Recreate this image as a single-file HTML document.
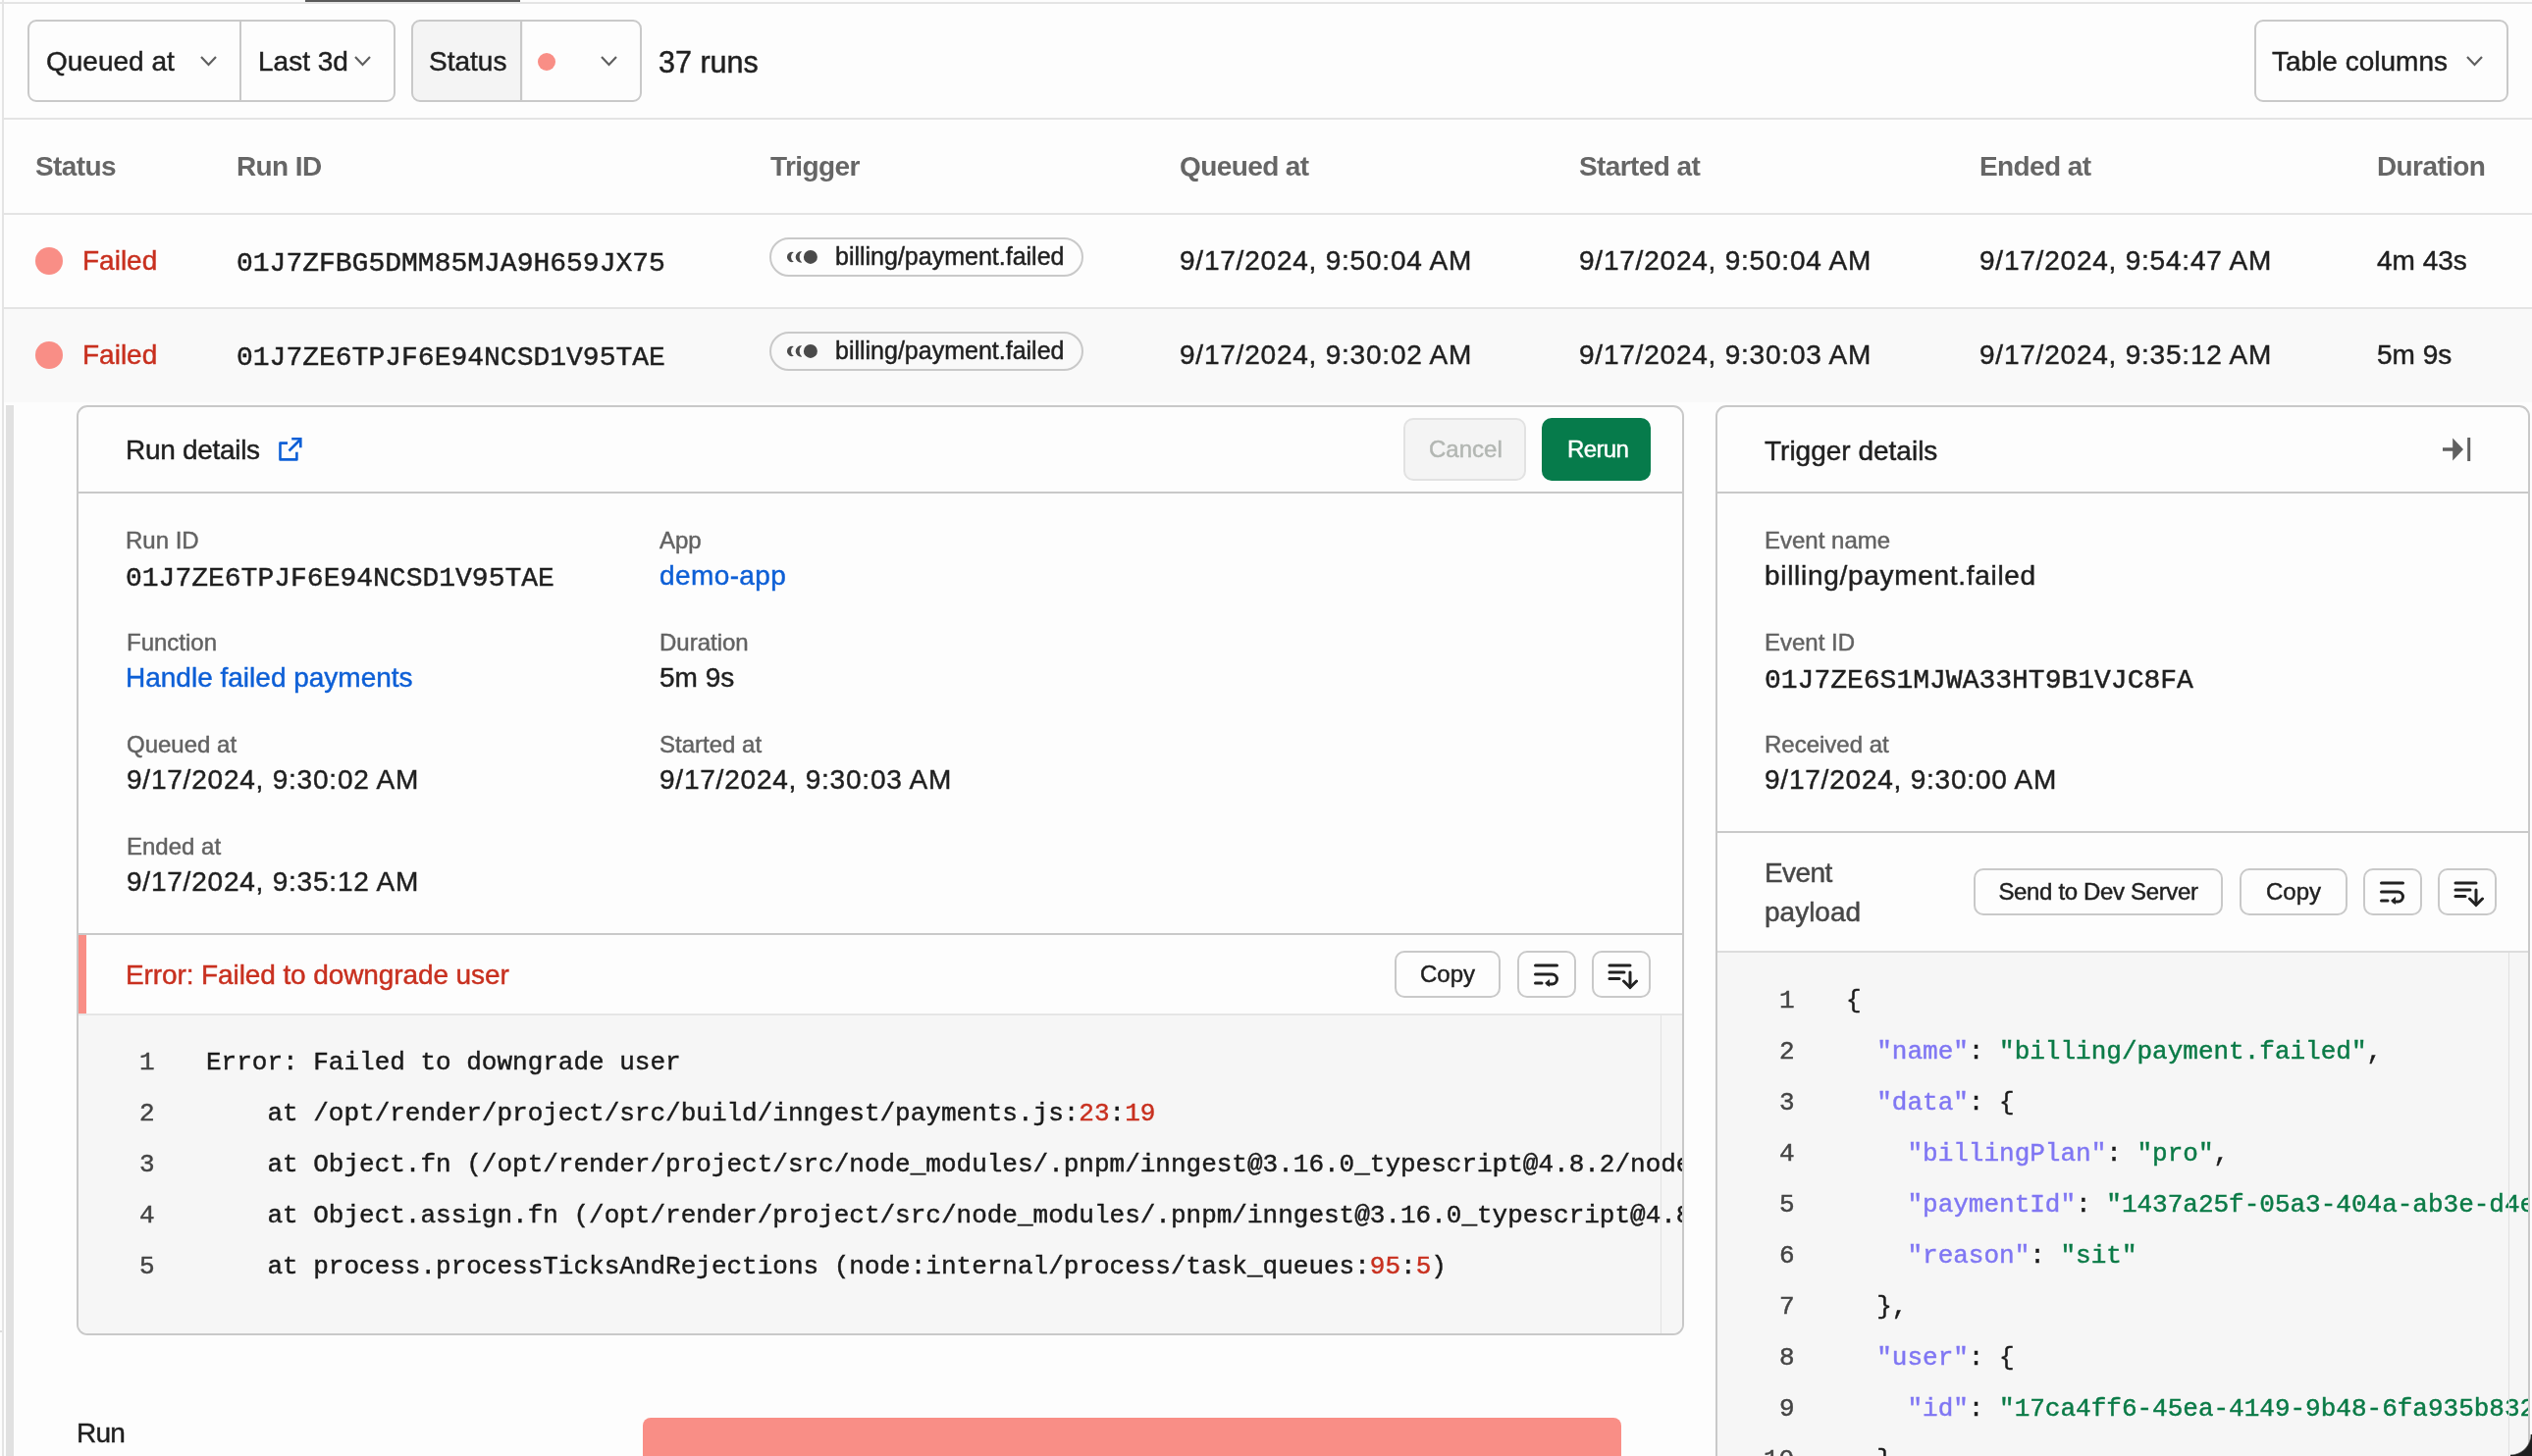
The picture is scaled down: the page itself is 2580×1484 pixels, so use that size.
<!DOCTYPE html>
<html><head><meta charset="utf-8"><title>Runs</title>
<style>
html,body{margin:0;padding:0;}
body{width:2580px;height:1484px;position:relative;overflow:hidden;background:#fdfdfd;font-family:'Liberation Sans', sans-serif;}
div{-webkit-text-stroke:0.45px currentColor;will-change:transform;}
</style></head><body>
<div style="position:absolute;left:0px;top:2px;width:2580px;height:2px;box-sizing:border-box;background:#e4e4e4"></div>
<div style="position:absolute;left:311px;top:0px;width:219px;height:2px;box-sizing:border-box;background:#5a5a5a"></div>
<div style="position:absolute;left:2px;top:0px;width:2px;height:1484px;box-sizing:border-box;background:#e4e4e4"></div>
<div style="position:absolute;left:28px;top:20px;width:375px;height:84px;box-sizing:border-box;border:2px solid #c9c9c9;border-radius:9px"></div>
<div style="position:absolute;left:244px;top:21px;width:2px;height:82px;box-sizing:border-box;background:#c9c9c9"></div>
<div style="position:absolute;left:47.0px;top:49.3px;font-family:'Liberation Sans', sans-serif;font-size:28px;line-height:28px;color:#1f1f1f;font-weight:400;white-space:pre;">Queued at</div>
<svg style="position:absolute;left:201.5px;top:55px;" width="21.0" height="14" viewBox="0 0 21.0 14"><path d="M3 3 L10.5 11 L18.0 3" fill="none" stroke="#5f5f5f" stroke-width="2.2"/></svg>
<div style="position:absolute;left:263.0px;top:49.3px;font-family:'Liberation Sans', sans-serif;font-size:28px;line-height:28px;color:#1f1f1f;font-weight:400;white-space:pre;">Last 3d</div>
<svg style="position:absolute;left:358.5px;top:55px;" width="21.0" height="14" viewBox="0 0 21.0 14"><path d="M3 3 L10.5 11 L18.0 3" fill="none" stroke="#5f5f5f" stroke-width="2.2"/></svg>
<div style="position:absolute;left:419px;top:20px;width:235px;height:84px;box-sizing:border-box;border:2px solid #c9c9c9;border-radius:9px;background:linear-gradient(to right,#f4f4f4 112px,#fdfdfd 112px)"></div>
<div style="position:absolute;left:530px;top:21px;width:2px;height:82px;box-sizing:border-box;background:#c9c9c9"></div>
<div style="position:absolute;left:437.0px;top:49.3px;font-family:'Liberation Sans', sans-serif;font-size:28px;line-height:28px;color:#1f1f1f;font-weight:400;white-space:pre;">Status</div>
<div style="position:absolute;left:548px;top:54px;width:18px;height:18px;border-radius:50%;background:#f98e86"></div>
<svg style="position:absolute;left:609.5px;top:54.5px;" width="21.0" height="14" viewBox="0 0 21.0 14"><path d="M3 3 L10.5 11 L18.0 3" fill="none" stroke="#5f5f5f" stroke-width="2.2"/></svg>
<div style="position:absolute;left:671.0px;top:47.7px;font-family:'Liberation Sans', sans-serif;font-size:30.5px;line-height:30.5px;color:#1f1f1f;font-weight:400;white-space:pre;">37 runs</div>
<div style="position:absolute;left:2297px;top:20px;width:259px;height:84px;box-sizing:border-box;border:2px solid #c9c9c9;border-radius:9px"></div>
<div style="position:absolute;left:2315.0px;top:48.8px;font-family:'Liberation Sans', sans-serif;font-size:28px;line-height:28px;color:#1f1f1f;font-weight:400;white-space:pre;">Table columns</div>
<svg style="position:absolute;left:2511.0px;top:54.5px;" width="21.0" height="14" viewBox="0 0 21.0 14"><path d="M3 3 L10.5 11 L18.0 3" fill="none" stroke="#5f5f5f" stroke-width="2.2"/></svg>
<div style="position:absolute;left:4px;top:120px;width:2576px;height:2px;box-sizing:border-box;background:#e4e4e4"></div>
<div style="position:absolute;left:4px;top:217px;width:2576px;height:2px;box-sizing:border-box;background:#e4e4e4"></div>
<div style="position:absolute;left:4px;top:313px;width:2576px;height:2px;box-sizing:border-box;background:#e4e4e4"></div>
<div style="position:absolute;left:4px;top:315px;width:2576px;height:95px;box-sizing:border-box;background:#f9f9f9"></div>
<div style="position:absolute;left:36.0px;top:156.3px;font-family:'Liberation Sans', sans-serif;font-size:28px;line-height:28px;color:#666666;font-weight:700;white-space:pre;letter-spacing:-0.6px;-webkit-text-stroke:0;">Status</div>
<div style="position:absolute;left:241.0px;top:156.3px;font-family:'Liberation Sans', sans-serif;font-size:28px;line-height:28px;color:#666666;font-weight:700;white-space:pre;letter-spacing:-0.6px;-webkit-text-stroke:0;">Run ID</div>
<div style="position:absolute;left:785.0px;top:156.3px;font-family:'Liberation Sans', sans-serif;font-size:28px;line-height:28px;color:#666666;font-weight:700;white-space:pre;letter-spacing:-0.6px;-webkit-text-stroke:0;">Trigger</div>
<div style="position:absolute;left:1202.0px;top:156.3px;font-family:'Liberation Sans', sans-serif;font-size:28px;line-height:28px;color:#666666;font-weight:700;white-space:pre;letter-spacing:-0.6px;-webkit-text-stroke:0;">Queued at</div>
<div style="position:absolute;left:1609.0px;top:156.3px;font-family:'Liberation Sans', sans-serif;font-size:28px;line-height:28px;color:#666666;font-weight:700;white-space:pre;letter-spacing:-0.6px;-webkit-text-stroke:0;">Started at</div>
<div style="position:absolute;left:2017.0px;top:156.3px;font-family:'Liberation Sans', sans-serif;font-size:28px;line-height:28px;color:#666666;font-weight:700;white-space:pre;letter-spacing:-0.6px;-webkit-text-stroke:0;">Ended at</div>
<div style="position:absolute;left:2422.0px;top:156.3px;font-family:'Liberation Sans', sans-serif;font-size:28px;line-height:28px;color:#666666;font-weight:700;white-space:pre;letter-spacing:-0.6px;-webkit-text-stroke:0;">Duration</div>
<div style="position:absolute;left:36px;top:252px;width:28px;height:28px;border-radius:50%;background:#f98e86"></div>
<div style="position:absolute;left:83.5px;top:252.3px;font-family:'Liberation Sans', sans-serif;font-size:28px;line-height:28px;color:#c8301f;font-weight:400;white-space:pre;">Failed</div>
<div style="position:absolute;left:241.0px;top:254.5px;font-family:'Liberation Mono', monospace;font-size:28px;line-height:28px;color:#1f1f1f;font-weight:400;white-space:pre;">01J7ZFBG5DMM85MJA9H659JX75</div>
<div style="position:absolute;left:784px;top:242px;width:320px;height:40px;box-sizing:border-box;border:2px solid #c9c9c9;border-radius:20px"></div>
<svg style="position:absolute;left:798px;top:250px;" width="40" height="24" viewBox="0 0 40 24"><path d="M10.8 7.1 A5.15 5.15 0 1 0 10.8 16.8 A5.6 5.6 0 0 1 10.8 7.1 Z" fill="#4a4a4a"/><path d="M19.1 6.3 A5.7 5.7 0 1 0 19.1 17.6 A7.6 7.6 0 0 1 19.1 6.3 Z" fill="#4a4a4a"/><circle cx="27.9" cy="11.9" r="7" fill="#4a4a4a"/></svg>
<div style="position:absolute;left:851.0px;top:248.8px;font-family:'Liberation Sans', sans-serif;font-size:25px;line-height:25px;color:#1f1f1f;font-weight:400;white-space:pre;">billing/payment.failed</div>
<div style="position:absolute;left:1202.0px;top:252.3px;font-family:'Liberation Sans', sans-serif;font-size:28px;line-height:28px;color:#1f1f1f;font-weight:400;white-space:pre;letter-spacing:0.78px;">9/17/2024, 9:50:04 AM</div>
<div style="position:absolute;left:1609.0px;top:252.3px;font-family:'Liberation Sans', sans-serif;font-size:28px;line-height:28px;color:#1f1f1f;font-weight:400;white-space:pre;letter-spacing:0.78px;">9/17/2024, 9:50:04 AM</div>
<div style="position:absolute;left:2017.0px;top:252.3px;font-family:'Liberation Sans', sans-serif;font-size:28px;line-height:28px;color:#1f1f1f;font-weight:400;white-space:pre;letter-spacing:0.78px;">9/17/2024, 9:54:47 AM</div>
<div style="position:absolute;left:2422.0px;top:252.3px;font-family:'Liberation Sans', sans-serif;font-size:28px;line-height:28px;color:#1f1f1f;font-weight:400;white-space:pre;">4m 43s</div>
<div style="position:absolute;left:36px;top:348px;width:28px;height:28px;border-radius:50%;background:#f98e86"></div>
<div style="position:absolute;left:83.5px;top:348.3px;font-family:'Liberation Sans', sans-serif;font-size:28px;line-height:28px;color:#c8301f;font-weight:400;white-space:pre;">Failed</div>
<div style="position:absolute;left:241.0px;top:350.5px;font-family:'Liberation Mono', monospace;font-size:28px;line-height:28px;color:#1f1f1f;font-weight:400;white-space:pre;">01J7ZE6TPJF6E94NCSD1V95TAE</div>
<div style="position:absolute;left:784px;top:338px;width:320px;height:40px;box-sizing:border-box;border:2px solid #c9c9c9;border-radius:20px"></div>
<svg style="position:absolute;left:798px;top:346px;" width="40" height="24" viewBox="0 0 40 24"><path d="M10.8 7.1 A5.15 5.15 0 1 0 10.8 16.8 A5.6 5.6 0 0 1 10.8 7.1 Z" fill="#4a4a4a"/><path d="M19.1 6.3 A5.7 5.7 0 1 0 19.1 17.6 A7.6 7.6 0 0 1 19.1 6.3 Z" fill="#4a4a4a"/><circle cx="27.9" cy="11.9" r="7" fill="#4a4a4a"/></svg>
<div style="position:absolute;left:851.0px;top:344.8px;font-family:'Liberation Sans', sans-serif;font-size:25px;line-height:25px;color:#1f1f1f;font-weight:400;white-space:pre;">billing/payment.failed</div>
<div style="position:absolute;left:1202.0px;top:348.3px;font-family:'Liberation Sans', sans-serif;font-size:28px;line-height:28px;color:#1f1f1f;font-weight:400;white-space:pre;letter-spacing:0.78px;">9/17/2024, 9:30:02 AM</div>
<div style="position:absolute;left:1609.0px;top:348.3px;font-family:'Liberation Sans', sans-serif;font-size:28px;line-height:28px;color:#1f1f1f;font-weight:400;white-space:pre;letter-spacing:0.78px;">9/17/2024, 9:30:03 AM</div>
<div style="position:absolute;left:2017.0px;top:348.3px;font-family:'Liberation Sans', sans-serif;font-size:28px;line-height:28px;color:#1f1f1f;font-weight:400;white-space:pre;letter-spacing:0.78px;">9/17/2024, 9:35:12 AM</div>
<div style="position:absolute;left:2422.0px;top:348.3px;font-family:'Liberation Sans', sans-serif;font-size:28px;line-height:28px;color:#1f1f1f;font-weight:400;white-space:pre;">5m 9s</div>
<div style="position:absolute;left:6px;top:413px;width:8px;height:1071px;box-sizing:border-box;background:#e1e1e1"></div>
<div style="position:absolute;left:78px;top:413px;width:1638px;height:948px;box-sizing:border-box;border:2px solid #c9c9c9;border-radius:11px;background:#fdfdfd"></div>
<div style="position:absolute;left:80px;top:501px;width:1634px;height:2px;box-sizing:border-box;background:#c9c9c9"></div>
<div style="position:absolute;left:128.0px;top:444.8px;font-family:'Liberation Sans', sans-serif;font-size:28px;line-height:28px;color:#1f1f1f;font-weight:400;white-space:pre;letter-spacing:-0.3px;">Run details</div>
<svg style="position:absolute;left:280px;top:443px;" width="32" height="32" viewBox="0 0 32 32"><path d="M13 8.6 H5.5 V25.4 H22.4 V17.8" fill="none" stroke="#0d5fd6" stroke-width="2.6" stroke-linejoin="round"/><path d="M14.5 16.5 L26 5" fill="none" stroke="#0d5fd6" stroke-width="2.6"/><path d="M17.2 4.3 H26.3 V13.3" fill="none" stroke="#0d5fd6" stroke-width="2.6"/></svg>
<div style="position:absolute;left:1430px;top:426px;width:125px;height:64px;box-sizing:border-box;border:2px solid #e2e2e2;border-radius:10px;background:#f4f4f4"></div>
<div style="position:absolute;left:1456.0px;top:446.0px;font-family:'Liberation Sans', sans-serif;font-size:24px;line-height:24px;color:#b2b6b2;font-weight:400;white-space:pre;">Cancel</div>
<div style="position:absolute;left:1571px;top:426px;width:111px;height:64px;box-sizing:border-box;border-radius:10px;background:#067b4b"></div>
<div style="position:absolute;left:1597.0px;top:446.0px;font-family:'Liberation Sans', sans-serif;font-size:24px;line-height:24px;color:#ffffff;font-weight:400;white-space:pre;letter-spacing:-0.6px;">Rerun</div>
<div style="position:absolute;left:128.0px;top:538.7px;font-family:'Liberation Sans', sans-serif;font-size:24px;line-height:24px;color:#626262;font-weight:400;white-space:pre;">Run ID</div>
<div style="position:absolute;left:128.0px;top:575.5px;font-family:'Liberation Mono', monospace;font-size:28px;line-height:28px;color:#1f1f1f;font-weight:400;white-space:pre;">01J7ZE6TPJF6E94NCSD1V95TAE</div>
<div style="position:absolute;left:672.0px;top:538.7px;font-family:'Liberation Sans', sans-serif;font-size:24px;line-height:24px;color:#626262;font-weight:400;white-space:pre;">App</div>
<div style="position:absolute;left:672.0px;top:573.3px;font-family:'Liberation Sans', sans-serif;font-size:28px;line-height:28px;color:#0d5fd6;font-weight:400;white-space:pre;letter-spacing:0.4px;">demo-app</div>
<div style="position:absolute;left:129.0px;top:642.7px;font-family:'Liberation Sans', sans-serif;font-size:24px;line-height:24px;color:#626262;font-weight:400;white-space:pre;">Function</div>
<div style="position:absolute;left:127.5px;top:677.3px;font-family:'Liberation Sans', sans-serif;font-size:28px;line-height:28px;color:#0d5fd6;font-weight:400;white-space:pre;">Handle failed payments</div>
<div style="position:absolute;left:672.0px;top:642.7px;font-family:'Liberation Sans', sans-serif;font-size:24px;line-height:24px;color:#626262;font-weight:400;white-space:pre;">Duration</div>
<div style="position:absolute;left:672.0px;top:677.3px;font-family:'Liberation Sans', sans-serif;font-size:28px;line-height:28px;color:#1f1f1f;font-weight:400;white-space:pre;">5m 9s</div>
<div style="position:absolute;left:129.0px;top:746.7px;font-family:'Liberation Sans', sans-serif;font-size:24px;line-height:24px;color:#626262;font-weight:400;white-space:pre;">Queued at</div>
<div style="position:absolute;left:129.0px;top:781.3px;font-family:'Liberation Sans', sans-serif;font-size:28px;line-height:28px;color:#1f1f1f;font-weight:400;white-space:pre;letter-spacing:0.78px;">9/17/2024, 9:30:02 AM</div>
<div style="position:absolute;left:672.0px;top:746.7px;font-family:'Liberation Sans', sans-serif;font-size:24px;line-height:24px;color:#626262;font-weight:400;white-space:pre;">Started at</div>
<div style="position:absolute;left:672.0px;top:781.3px;font-family:'Liberation Sans', sans-serif;font-size:28px;line-height:28px;color:#1f1f1f;font-weight:400;white-space:pre;letter-spacing:0.78px;">9/17/2024, 9:30:03 AM</div>
<div style="position:absolute;left:129.0px;top:850.7px;font-family:'Liberation Sans', sans-serif;font-size:24px;line-height:24px;color:#626262;font-weight:400;white-space:pre;">Ended at</div>
<div style="position:absolute;left:129.0px;top:885.3px;font-family:'Liberation Sans', sans-serif;font-size:28px;line-height:28px;color:#1f1f1f;font-weight:400;white-space:pre;letter-spacing:0.78px;">9/17/2024, 9:35:12 AM</div>
<div style="position:absolute;left:80px;top:951px;width:1634px;height:2px;box-sizing:border-box;background:#c9c9c9"></div>
<div style="position:absolute;left:80px;top:953px;width:8px;height:80px;box-sizing:border-box;background:#f98e86"></div>
<div style="position:absolute;left:128.0px;top:979.8px;font-family:'Liberation Sans', sans-serif;font-size:28px;line-height:28px;color:#c8301f;font-weight:400;white-space:pre;letter-spacing:-0.1px;">Error: Failed to downgrade user</div>
<div style="position:absolute;left:1421px;top:969px;width:108px;height:48px;box-sizing:border-box;border:2px solid #c9c9c9;border-radius:10px;background:#fdfdfd"></div>
<div style="position:absolute;left:1421px;top:969px;width:108px;height:48px;display:flex;align-items:center;justify-content:center;font-family:'Liberation Sans', sans-serif;font-size:24px;letter-spacing:0px;color:#1f1f1f">Copy</div>
<div style="position:absolute;left:1546px;top:969px;width:60px;height:48px;box-sizing:border-box;border:2px solid #c9c9c9;border-radius:10px;background:#fdfdfd"></div>
<svg style="position:absolute;left:1561px;top:980px;" width="32" height="28" viewBox="0 0 32 28"><g fill="none" stroke="#222" stroke-width="3" stroke-linecap="round"><path d="M3.5 4 H25.5"/><path d="M3.5 13 H20.5 A5 5 0 0 1 20.5 23 H16"/><path d="M3.5 22 H10"/></g><path d="M13 22 L18 18 V26 Z" fill="#222"/></svg>
<div style="position:absolute;left:1622px;top:969px;width:60px;height:48px;box-sizing:border-box;border:2px solid #c9c9c9;border-radius:10px;background:#fdfdfd"></div>
<svg style="position:absolute;left:1637px;top:980px;" width="32" height="30" viewBox="0 0 32 30"><g fill="none" stroke="#222" stroke-width="3" stroke-linecap="round"><path d="M3 4 H24"/><path d="M3 11 H18"/><path d="M3 17.5 H13"/><path d="M24 11 V26"/><path d="M17.5 20 L24 26.5 L30.5 20"/></g></svg>
<div style="position:absolute;left:80px;top:1033px;width:1634px;height:2px;box-sizing:border-box;background:#e6e6e6"></div>
<div style="position:absolute;left:80px;top:1035px;width:1634px;height:324px;background:#f6f6f6;border-radius:0 0 9px 9px;overflow:hidden"></div>
<div style="position:absolute;left:80px;top:1035px;width:1634px;height:323px;overflow:hidden;border-radius:0 0 9px 9px">
<div style="position:absolute;left:62.4px;top:35.1px;font-family:'Liberation Mono', monospace;font-size:26px;line-height:26px;color:#444;white-space:pre">1</div>
<div style="position:absolute;left:130.4px;top:35.1px;font-family:'Liberation Mono', monospace;font-size:26px;line-height:26px;color:#1a1a1a;white-space:pre">Error: Failed to downgrade user</div>
<div style="position:absolute;left:62.4px;top:87.1px;font-family:'Liberation Mono', monospace;font-size:26px;line-height:26px;color:#444;white-space:pre">2</div>
<div style="position:absolute;left:130.4px;top:87.1px;font-family:'Liberation Mono', monospace;font-size:26px;line-height:26px;color:#1a1a1a;white-space:pre">    at /opt/render/project/src/build/inngest/payments.js:<span style="color:#c8301f">23</span>:<span style="color:#c8301f">19</span></div>
<div style="position:absolute;left:62.4px;top:139.1px;font-family:'Liberation Mono', monospace;font-size:26px;line-height:26px;color:#444;white-space:pre">3</div>
<div style="position:absolute;left:130.4px;top:139.1px;font-family:'Liberation Mono', monospace;font-size:26px;line-height:26px;color:#1a1a1a;white-space:pre">    at Object.fn (/opt/render/project/src/node_modules/.pnpm/inngest@3.16.0_typescript@4.8.2/node_modules/inngest/components/InngestFunction.js</div>
<div style="position:absolute;left:62.4px;top:191.1px;font-family:'Liberation Mono', monospace;font-size:26px;line-height:26px;color:#444;white-space:pre">4</div>
<div style="position:absolute;left:130.4px;top:191.1px;font-family:'Liberation Mono', monospace;font-size:26px;line-height:26px;color:#1a1a1a;white-space:pre">    at Object.assign.fn (/opt/render/project/src/node_modules/.pnpm/inngest@3.16.0_typescript@4.8.2/node_modules/inngest</div>
<div style="position:absolute;left:62.4px;top:243.1px;font-family:'Liberation Mono', monospace;font-size:26px;line-height:26px;color:#444;white-space:pre">5</div>
<div style="position:absolute;left:130.4px;top:243.1px;font-family:'Liberation Mono', monospace;font-size:26px;line-height:26px;color:#1a1a1a;white-space:pre">    at process.processTicksAndRejections (node:internal/process/task_queues:<span style="color:#c8301f">95</span>:<span style="color:#c8301f">5</span>)</div>
</div>
<div style="position:absolute;left:1692px;top:1035px;width:1px;height:324px;box-sizing:border-box;background:#e2e2e2"></div>
<div style="position:absolute;left:78.0px;top:1447.3px;font-family:'Liberation Sans', sans-serif;font-size:28px;line-height:28px;color:#1f1f1f;font-weight:400;white-space:pre;letter-spacing:-0.8px;">Run</div>
<div style="position:absolute;left:655px;top:1445px;width:997px;height:60px;box-sizing:border-box;border-radius:8px;background:#f98e86"></div>
<div style="position:absolute;left:1748px;top:413px;width:830px;height:1100px;box-sizing:border-box;border:2px solid #c9c9c9;border-radius:11px;background:#fdfdfd"></div>
<div style="position:absolute;left:1750px;top:501px;width:826px;height:2px;box-sizing:border-box;background:#c9c9c9"></div>
<div style="position:absolute;left:1798.0px;top:446.0px;font-family:'Liberation Sans', sans-serif;font-size:28px;line-height:28px;color:#1f1f1f;font-weight:400;white-space:pre;">Trigger details</div>
<svg style="position:absolute;left:2486px;top:444px;" width="36" height="28" viewBox="0 0 36 28"><path d="M3 14 H14" stroke="#606060" stroke-width="3.5"/><path d="M13.2 2.6 L24 14 L13.2 25.4 Z" fill="#606060"/><rect x="28.2" y="2" width="3" height="24" fill="#606060"/></svg>
<div style="position:absolute;left:1798.0px;top:538.7px;font-family:'Liberation Sans', sans-serif;font-size:24px;line-height:24px;color:#626262;font-weight:400;white-space:pre;">Event name</div>
<div style="position:absolute;left:1798.0px;top:573.3px;font-family:'Liberation Sans', sans-serif;font-size:28px;line-height:28px;color:#1f1f1f;font-weight:400;white-space:pre;letter-spacing:0.7px;">billing/payment.failed</div>
<div style="position:absolute;left:1798.0px;top:642.7px;font-family:'Liberation Sans', sans-serif;font-size:24px;line-height:24px;color:#626262;font-weight:400;white-space:pre;">Event ID</div>
<div style="position:absolute;left:1798.0px;top:679.5px;font-family:'Liberation Mono', monospace;font-size:28px;line-height:28px;color:#1f1f1f;font-weight:400;white-space:pre;">01J7ZE6S1MJWA33HT9B1VJC8FA</div>
<div style="position:absolute;left:1798.0px;top:746.7px;font-family:'Liberation Sans', sans-serif;font-size:24px;line-height:24px;color:#626262;font-weight:400;white-space:pre;">Received at</div>
<div style="position:absolute;left:1798.0px;top:781.3px;font-family:'Liberation Sans', sans-serif;font-size:28px;line-height:28px;color:#1f1f1f;font-weight:400;white-space:pre;letter-spacing:0.78px;">9/17/2024, 9:30:00 AM</div>
<div style="position:absolute;left:1750px;top:847px;width:826px;height:2px;box-sizing:border-box;background:#c9c9c9"></div>
<div style="position:absolute;left:1798.0px;top:876.3px;font-family:'Liberation Sans', sans-serif;font-size:28px;line-height:28px;color:#474747;font-weight:400;white-space:pre;letter-spacing:-0.6px;">Event</div>
<div style="position:absolute;left:1798.0px;top:916.3px;font-family:'Liberation Sans', sans-serif;font-size:28px;line-height:28px;color:#474747;font-weight:400;white-space:pre;">payload</div>
<div style="position:absolute;left:2011px;top:885px;width:254px;height:48px;box-sizing:border-box;border:2px solid #c9c9c9;border-radius:10px;background:#fdfdfd"></div>
<div style="position:absolute;left:2011px;top:885px;width:254px;height:48px;display:flex;align-items:center;justify-content:center;font-family:'Liberation Sans', sans-serif;font-size:24px;letter-spacing:-0.35px;color:#1f1f1f">Send to Dev Server</div>
<div style="position:absolute;left:2282px;top:885px;width:110px;height:48px;box-sizing:border-box;border:2px solid #c9c9c9;border-radius:10px;background:#fdfdfd"></div>
<div style="position:absolute;left:2282px;top:885px;width:110px;height:48px;display:flex;align-items:center;justify-content:center;font-family:'Liberation Sans', sans-serif;font-size:24px;letter-spacing:0px;color:#1f1f1f">Copy</div>
<div style="position:absolute;left:2408px;top:885px;width:60px;height:48px;box-sizing:border-box;border:2px solid #c9c9c9;border-radius:10px;background:#fdfdfd"></div>
<svg style="position:absolute;left:2423px;top:896px;" width="32" height="28" viewBox="0 0 32 28"><g fill="none" stroke="#222" stroke-width="3" stroke-linecap="round"><path d="M3.5 4 H25.5"/><path d="M3.5 13 H20.5 A5 5 0 0 1 20.5 23 H16"/><path d="M3.5 22 H10"/></g><path d="M13 22 L18 18 V26 Z" fill="#222"/></svg>
<div style="position:absolute;left:2484px;top:885px;width:60px;height:48px;box-sizing:border-box;border:2px solid #c9c9c9;border-radius:10px;background:#fdfdfd"></div>
<svg style="position:absolute;left:2499px;top:896px;" width="32" height="30" viewBox="0 0 32 30"><g fill="none" stroke="#222" stroke-width="3" stroke-linecap="round"><path d="M3 4 H24"/><path d="M3 11 H18"/><path d="M3 17.5 H13"/><path d="M24 11 V26"/><path d="M17.5 20 L24 26.5 L30.5 20"/></g></svg>
<div style="position:absolute;left:1750px;top:969px;width:826px;height:2px;box-sizing:border-box;background:#dcdcdc"></div>
<div style="position:absolute;left:1750px;top:971px;width:826px;height:520px;box-sizing:border-box;background:#f6f6f6"></div>
<div style="position:absolute;left:1750px;top:971px;width:826px;height:513px;overflow:hidden">
<div style="position:absolute;left:62.8px;top:35.7px;font-family:'Liberation Mono', monospace;font-size:26px;line-height:26px;color:#444;white-space:pre">1</div>
<div style="position:absolute;left:131.0px;top:35.7px;font-family:'Liberation Mono', monospace;font-size:26px;line-height:26px;color:#1a1a1a;white-space:pre">{</div>
<div style="position:absolute;left:62.8px;top:87.7px;font-family:'Liberation Mono', monospace;font-size:26px;line-height:26px;color:#444;white-space:pre">2</div>
<div style="position:absolute;left:131.0px;top:87.7px;font-family:'Liberation Mono', monospace;font-size:26px;line-height:26px;color:#1a1a1a;white-space:pre">  <span style="color:#7f76f3">"name"</span>: <span style="color:#0a7a46">"billing/payment.failed"</span>,</div>
<div style="position:absolute;left:62.8px;top:139.7px;font-family:'Liberation Mono', monospace;font-size:26px;line-height:26px;color:#444;white-space:pre">3</div>
<div style="position:absolute;left:131.0px;top:139.7px;font-family:'Liberation Mono', monospace;font-size:26px;line-height:26px;color:#1a1a1a;white-space:pre">  <span style="color:#7f76f3">"data"</span>: {</div>
<div style="position:absolute;left:62.8px;top:191.7px;font-family:'Liberation Mono', monospace;font-size:26px;line-height:26px;color:#444;white-space:pre">4</div>
<div style="position:absolute;left:131.0px;top:191.7px;font-family:'Liberation Mono', monospace;font-size:26px;line-height:26px;color:#1a1a1a;white-space:pre">    <span style="color:#7f76f3">"billingPlan"</span>: <span style="color:#0a7a46">"pro"</span>,</div>
<div style="position:absolute;left:62.8px;top:243.7px;font-family:'Liberation Mono', monospace;font-size:26px;line-height:26px;color:#444;white-space:pre">5</div>
<div style="position:absolute;left:131.0px;top:243.7px;font-family:'Liberation Mono', monospace;font-size:26px;line-height:26px;color:#1a1a1a;white-space:pre">    <span style="color:#7f76f3">"paymentId"</span>: <span style="color:#0a7a46">"1437a25f-05a3-404a-ab3e-d4e6d3c1e7a2"</span>,</div>
<div style="position:absolute;left:62.8px;top:295.7px;font-family:'Liberation Mono', monospace;font-size:26px;line-height:26px;color:#444;white-space:pre">6</div>
<div style="position:absolute;left:131.0px;top:295.7px;font-family:'Liberation Mono', monospace;font-size:26px;line-height:26px;color:#1a1a1a;white-space:pre">    <span style="color:#7f76f3">"reason"</span>: <span style="color:#0a7a46">"sit"</span></div>
<div style="position:absolute;left:62.8px;top:347.7px;font-family:'Liberation Mono', monospace;font-size:26px;line-height:26px;color:#444;white-space:pre">7</div>
<div style="position:absolute;left:131.0px;top:347.7px;font-family:'Liberation Mono', monospace;font-size:26px;line-height:26px;color:#1a1a1a;white-space:pre">  },</div>
<div style="position:absolute;left:62.8px;top:399.7px;font-family:'Liberation Mono', monospace;font-size:26px;line-height:26px;color:#444;white-space:pre">8</div>
<div style="position:absolute;left:131.0px;top:399.7px;font-family:'Liberation Mono', monospace;font-size:26px;line-height:26px;color:#1a1a1a;white-space:pre">  <span style="color:#7f76f3">"user"</span>: {</div>
<div style="position:absolute;left:62.8px;top:451.7px;font-family:'Liberation Mono', monospace;font-size:26px;line-height:26px;color:#444;white-space:pre">9</div>
<div style="position:absolute;left:131.0px;top:451.7px;font-family:'Liberation Mono', monospace;font-size:26px;line-height:26px;color:#1a1a1a;white-space:pre">    <span style="color:#7f76f3">"id"</span>: <span style="color:#0a7a46">"17ca4ff6-45ea-4149-9b48-6fa935b83281"</span></div>
<div style="position:absolute;left:47.2px;top:503.7px;font-family:'Liberation Mono', monospace;font-size:26px;line-height:26px;color:#444;white-space:pre">10</div>
<div style="position:absolute;left:131.0px;top:503.7px;font-family:'Liberation Mono', monospace;font-size:26px;line-height:26px;color:#1a1a1a;white-space:pre">  }</div>
</div>
<div style="position:absolute;left:2556px;top:971px;width:1px;height:520px;box-sizing:border-box;background:#e0e0e0"></div>
<div style="position:absolute;left:0px;top:1356px;width:2px;height:2px;box-sizing:border-box;background:#dddddd"></div>
<div style="position:absolute;left:2558px;top:1462px;width:22px;height:22px;background:radial-gradient(circle at 0 0, transparent 20px, #1e1e1e 21.5px)"></div>
</body></html>
